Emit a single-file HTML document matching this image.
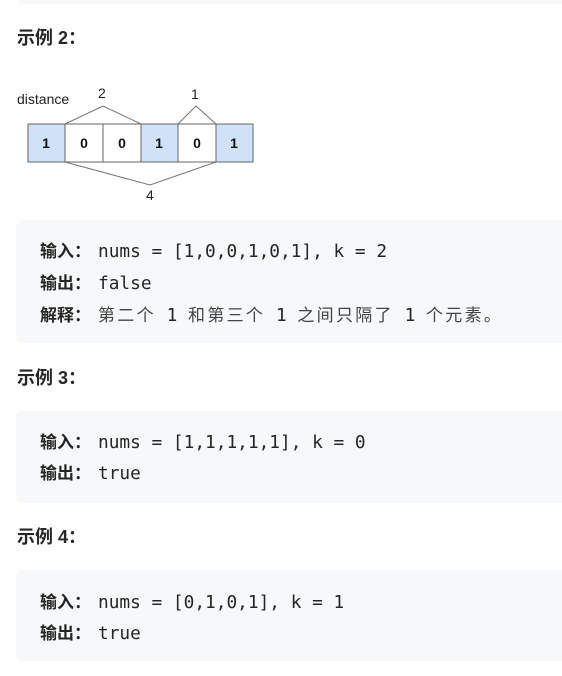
<!DOCTYPE html>
<html><head><meta charset="utf-8"><style>
body{margin:0;width:562px;height:676px;background:#fff;position:relative;overflow:hidden;font-family:"Liberation Sans","Noto Sans CJK SC",sans-serif;color:#262626}
.h{position:absolute;left:17px;font-weight:bold;font-size:18px;line-height:20px}
.pre{position:absolute;left:16px;width:560px;background:#f7f8fa;border-radius:6px}
.l{position:absolute;left:24px;font-family:"DejaVu Sans Mono","Noto Sans CJK SC",monospace;font-size:17.8px;line-height:20px;white-space:pre;color:#262626}
.l b{display:inline-block;width:58px;font-family:"Noto Sans CJK SC",sans-serif;font-weight:bold;font-size:17px}
.l span.c{font-family:"Noto Sans CJK SC",sans-serif;color:#444;font-size:17px;letter-spacing:2.3px}
</style></head><body>
<div class="pre" style="top:-20px;height:24px"></div>
<div class="h" style="top:28px">示例 2：</div>
<svg style="position:absolute;left:0;top:80px" width="280" height="130">
<text x="17" y="24" font-family="Liberation Sans" font-size="14" fill="#222">distance</text>
<text x="98" y="18" font-family="Liberation Sans" font-size="14" fill="#222">2</text>
<text x="191" y="19" font-family="Liberation Sans" font-size="14" fill="#222">1</text>
<text x="146" y="120" font-family="Liberation Sans" font-size="14" fill="#222">4</text>
<polyline points="65,44 103,26 141,44" fill="none" stroke="#777"/>
<polyline points="178,44 196,26 216,44" fill="none" stroke="#777"/>
<polyline points="65,82 150,105 216,82" fill="none" stroke="#777"/>
<g stroke="#666" stroke-width="1">
<rect x="28" y="44" width="37" height="38" fill="#cfe2f8"/>
<rect x="65" y="44" width="38" height="38" fill="#fff"/>
<rect x="103" y="44" width="38" height="38" fill="#fff"/>
<rect x="141" y="44" width="37" height="38" fill="#cfe2f8"/>
<rect x="178" y="44" width="38" height="38" fill="#fff"/>
<rect x="216" y="44" width="37" height="38" fill="#cfe2f8"/>
</g>
<g font-family="Liberation Sans" font-weight="bold" font-size="14" fill="#111" text-anchor="middle">
<text x="46" y="68">1</text><text x="84" y="68">0</text><text x="122" y="68">0</text><text x="159" y="68">1</text><text x="197" y="68">0</text><text x="234" y="68">1</text>
</g>
</svg>
<div class="pre" style="top:220px;height:123px">
<div class="l" style="top:20px"><b>输入：</b>nums = [1,0,0,1,0,1], k = 2</div>
<div class="l" style="top:52px"><b>输出：</b>false</div>
<div class="l" style="top:84px"><b>解释：</b><span class="c">第二个</span> 1 <span class="c">和第三个</span> 1 <span class="c">之间只隔了</span> 1 <span class="c">个元素。</span></div>
</div>
<div class="h" style="top:368px">示例 3：</div>
<div class="pre" style="top:411px;height:92px">
<div class="l" style="top:20px"><b>输入：</b>nums = [1,1,1,1,1], k = 0</div>
<div class="l" style="top:51px"><b>输出：</b>true</div>
</div>
<div class="h" style="top:527px">示例 4：</div>
<div class="pre" style="top:570px;height:91px">
<div class="l" style="top:21px"><b>输入：</b>nums = [0,1,0,1], k = 1</div>
<div class="l" style="top:52px"><b>输出：</b>true</div>
</div>
</body></html>
